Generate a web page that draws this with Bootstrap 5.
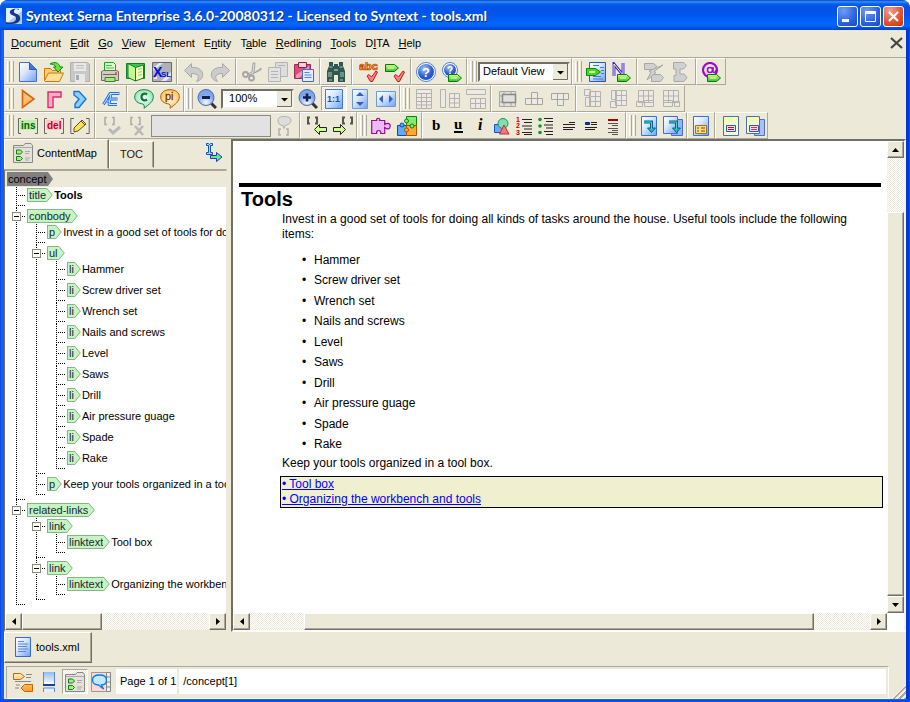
<!DOCTYPE html>
<html lang="en">
<head>
<meta charset="utf-8">
<meta name="viewport" content="width=device-width, initial-scale=1">
<title>Syntext Serna Enterprise 3.6.0-20080312 - Licensed to Syntext - tools.xml</title>
<link rel="stylesheet" href="https://cdn.jsdelivr.net/npm/bootstrap@5.3.0/dist/css/bootstrap.min.css">
<script src="https://cdn.jsdelivr.net/npm/bootstrap@5.3.0/dist/js/bootstrap.bundle.min.js"></script>
<style>
:root{--face:#ece9d8;--shade:#aca899;--dark:#716f64}
body{font:11px/16px "Liberation Sans",Arial,sans-serif;color:#000;background:#fff}
svg{display:block;flex:none}
button{font:inherit;color:inherit;padding:0;border:0;background:none}
.window{border-radius:8px 8px 0 0;overflow:hidden;background:#0a4be6}
.titlebar{height:30px;padding:2px 6px 0;background:linear-gradient(#0a3fc8 0,#3c94ff 2px,#0a6cf5 3px,#0053e4 6px,#0055ea 14px,#06f 24px,#0062f8 26px,#003dd0 30px)}
.titlebar h1{font:bold 14px/20px Lato,"Noto Sans",sans-serif;color:#fff;text-shadow:1px 1px #0a2f8c;margin:0}
.caps{gap:2px}
.capbtn{width:21px;height:21px;border:1px solid #fff;border-radius:3px;background:radial-gradient(circle at 30% 20%,#6f9cf8,#2a60e6 60%,#1a48c8)}
.capbtn.shut{background:radial-gradient(circle at 30% 20%,#f0a088,#e0502c 60%,#c03810)}
.client{min-height:0;margin:0 4px 3px;background:var(--face);box-shadow:-3px 0 #1660f0,3px 0 #0038d8,0 1px #1660f0}
.fit{min-width:0;min-height:0}
.menus{height:27px;padding:0 2px 2px 3px}
.menus .nav-link{color:#000;padding:4px 5px 4px 4px;line-height:16px}
.menus .nav-link span{text-decoration:underline}
.bars{border-top:1px solid var(--shade)}
.seg{height:27px;border:1px solid;border-color:#fff var(--shade) var(--shade) #fff;padding:0 1px;display:flex;align-items:center}
.seg-a{padding:0 2px 0 3px}.seg-b{padding:0 2px}.seg-c{padding:0 0 0 3px}
.bar:first-child>.seg:first-child{border-left-color:var(--face)}
.grip{width:8px;margin-right:1px;height:21px;flex:none;background:linear-gradient(90deg,transparent 1px,#fff 1px 2px,var(--face) 2px 3px,var(--shade) 3px 4px,transparent 4px 5px,#fff 5px 6px,var(--face) 6px 7px,var(--shade) 7px 8px)}
.tb{width:26px;height:25px;display:flex;align-items:center;justify-content:center;flex:none}
.tb svg{width:20px;height:20px}
.n22 .tb{width:22px}.n24 .tb{width:24px}
.tb:hover,.capbtn:hover{filter:brightness(1.06)}
.checker{background:repeating-conic-gradient(#fff 0 25%,#ece9d8 0 50%) 0 0/2px 2px}
.sunk{border:1px solid;border-color:var(--shade) #fff #fff var(--shade)}
select.pick{font:11px/15px "Liberation Sans",Arial,sans-serif;height:20px;border:2px solid;border-color:var(--dark) #f4f2e8 #f4f2e8 var(--dark);border-radius:0;padding:0 16px 0 3px;appearance:none;color:#000;background:#fff url("data:image/svg+xml,%3Csvg xmlns='http://www.w3.org/2000/svg' width='15' height='16'%3E%3Cpath fill='%23ece9d8' d='M0 0h15v16H0z'/%3E%3Cpath stroke='%23716f64' fill='none' d='M14.500 0v15.500H0'/%3E%3Cpath d='M4 7h7L7.500 10.500z'/%3E%3C/svg%3E") right center no-repeat}
.zoomsel{width:73px;margin:0 1px}.viewsel{width:92px}
input.tagbox{width:120px;height:22px;border:1px solid #8c8a80;background:#e2e2e2;padding:0 4px}
.side{width:223px;flex:none}
.tabrow{height:30px}
.ptab{height:27px;border:1px solid;border-color:#fff var(--dark) transparent #fff;box-shadow:inset -1px 0 var(--shade);display:flex;align-items:center}
.ptab.cur{height:30px;width:105px;padding:0 0 2px 8px}
.ptab.off{width:45px;margin-top:2px;padding-bottom:2px;justify-content:center;color:#311}
.tree{border:1px solid;border-width:2px 1px;border-color:var(--shade) var(--face) var(--face) var(--dark);background:#fff}
.frame{border:1px solid;border-width:2px 2px;border-color:var(--dark) #f6f4ea #fff var(--dark);background:#fff}
.tree ul{list-style:none;margin:0 0 0 9px;padding:0}
.tree .root{margin:0}
.tree .root>li>ul{margin-left:11px}
.tree .root>li>.nrow{background:var(--face);padding-left:2px}
.tree li li{padding:0 0 5px 11px;background:
 repeating-linear-gradient(#000 0 1px,transparent 1px 2px) 0 0/1px 100% no-repeat,
 repeating-linear-gradient(90deg,#000 0 1px,transparent 1px 2px) 0 8px/10px 1px no-repeat,
 repeating-linear-gradient(90deg,#000 0 1px,transparent 1px 2px) 0 calc(100% - 2px)/10px 1px no-repeat}
.tree li li:last-child{background-size:1px calc(100% - 2px),10px 1px,10px 1px}
.nrow{display:flex;align-items:center;height:16px;white-space:nowrap}
.fold{width:9px;height:9px;margin:0 6px 0 -15px;border:1px solid #8c8a78;background:linear-gradient(#000,#000) center/5px 1px no-repeat #fff;flex:none}
.tagname{height:14px;line-height:12px;border:1px solid #86b886;border-right:0;background:#c5f5c0;color:#1c2440;padding:0 0 0 1px}
.nrow .tip{margin-right:1px}
.tagname.sel{background:#808080;border-color:#808080;color:#000;padding:0}
.sbtn{width:17px;height:17px;flex:none;background:var(--face);border:1px solid;border-color:#fff var(--dark) var(--dark) #fff;box-shadow:inset -1px -1px var(--shade);display:flex;align-items:center;justify-content:center}
.thumb{background:var(--face);border:1px solid;border-color:#fff var(--dark) var(--dark) #fff;box-shadow:inset -1px -1px var(--shade)}
.hbar{height:17px}
.vbar{width:17px;padding-bottom:17px}
.t80{width:80px}.t54{height:54px}
.doc{padding:42px 4px 0 6px;font-size:12px;line-height:15px}
.doc h2{font-size:20px;line-height:22px;font-weight:bold;border-top:4px solid #000;margin:0 2px 0 0;padding:1px 2px 2px}
.doc .body{margin-left:43px}
.doc p{margin:0 12px 0 0}
.doc ul{margin:8px 0 1px;padding:0;list-style:none}
.doc ul li{line-height:20px;display:flex}
.doc ul li:nth-child(even){line-height:21px}
.doc ul li::before{content:"•";width:12px;margin-left:20px}
.rel{margin:5px 0 0 -2px;border:1px solid #000;background:#f0efd0;padding:0 1px}
.rel a{color:#00f;text-decoration:underline}
.filetab{height:31px;width:88px;border:1px solid;border-color:#fff var(--dark) var(--dark) #fff;box-shadow:inset -1px -1px var(--shade);padding:0 0 2px 9px}
.status{height:33px;border-color:var(--shade) #fff #fff var(--shade);margin:3px 17px 0 2px;padding:1px 2px 3px 3px}
.field{background:#fff;height:25px;line-height:24px;padding:0 1px 0 4px;margin-left:2px}
.sizer{width:14px;height:14px;right:0;bottom:0;background:repeating-linear-gradient(135deg,transparent 0 1px,#fff 1px 2px,var(--shade) 2px 4px);clip-path:polygon(100% 0,100% 100%,0 100%)}
</style>
</head>
<body>
<svg width="0" height="0" class="position-absolute" aria-hidden="true">
<defs>
<linearGradient id="pg" x1="0" y1="0" x2="1" y2="1"><stop offset="0" stop-color="#fff"/><stop offset=".4" stop-color="#dbe8ff"/><stop offset="1" stop-color="#6fa0f0"/></linearGradient>
<linearGradient id="pv" x1="0" y1="0" x2="0" y2="1"><stop offset="0" stop-color="#8fbcf8"/><stop offset="1" stop-color="#fff"/></linearGradient>
<linearGradient id="ye" x1="0" y1="0" x2="1" y2="1"><stop offset="0" stop-color="#e8ffb0"/><stop offset="1" stop-color="#fffbd8"/></linearGradient>
<linearGradient id="or" x1="0" y1="0" x2="0" y2="1"><stop offset="0" stop-color="#fff0b0"/><stop offset="1" stop-color="#ff9c20"/></linearGradient>
<linearGradient id="gn" x1="0" y1="0" x2="0" y2="1"><stop offset="0" stop-color="#d8ff80"/><stop offset="1" stop-color="#30c030"/></linearGradient>
<radialGradient id="ball" cx=".4" cy=".3"><stop offset="0" stop-color="#a8c8ff"/><stop offset="1" stop-color="#2858d0"/></radialGradient>
<radialGradient id="lens" cx=".5" cy=".8"><stop offset="0" stop-color="#f4faff"/><stop offset="1" stop-color="#7ca4f0"/></radialGradient>
<radialGradient id="mint"><stop offset="0" stop-color="#fff"/><stop offset="1" stop-color="#9ce4bc"/></radialGradient>
<radialGradient id="peach"><stop offset="0" stop-color="#fffbe8"/><stop offset="1" stop-color="#ffc860"/></radialGradient>
<symbol id="tipg" viewBox="0 0 7 14"><path d="M0 0H1L6.500 7 1 14H0z" fill="#c5f5c0"/><path d="M0 .5H.8L6.300 7 .8 13.500H0" fill="none" stroke="#86b886"/></symbol>
<symbol id="etag" viewBox="0 0 14 8"><path d="M.5.500h9l4 3.500-4 3.500h-9z" fill="url(#gn)" stroke="#087808"/><path d="M3 4h6" stroke="#f0ffc0"/></symbol>
<symbol id="tick" viewBox="0 0 12 12"><path d="M1 6l2-1.500 2.500 2.500 4.500-6 1.500 1-5 9.500h-2z" fill="#ff8080" stroke="#c01818"/></symbol>
<symbol id="cmap" viewBox="0 0 20 20"><path d="M.5 19.500v-17h10l1.500-2h6l1.500 2v17z" fill="#e4e2d8" stroke="#888"/><path d="M1 4.500h18" stroke="#aaa"/><path d="M3.500 7h4l2 2-2 2h-4zM3.500 13.500h4l2 2-2 2h-4z" fill="#a0f080" stroke="#187818"/><path d="M12 8.500h5M12 10.500h4M12 15h5M12 17h4" stroke="#aaa"/></symbol>
</defs>
</svg>
<div class="window vh-100 d-flex flex-column">
<header class="titlebar d-flex align-items-center">
<svg class="me-1" width="16" height="16" viewBox="0 0 16 16"><path fill="#e4efff" d="M0 0h16v16H0z"/><path fill="#1a4c98" d="M0 16L16 3v13z" opacity=".25"/><path d="M13 1C7 0 3 2 4 5s7 2 6 6-6 4-10 3v2h6c6 0 9-3 8-7S7 6 8 3s3-2 5-1z" fill="#123c88"/></svg>
<h1 class="flex-grow-1">Syntext Serna Enterprise 3.6.0-20080312 - Licensed to Syntext - tools.xml</h1>
<div class="caps d-flex">
<button class="capbtn" aria-label="Minimize"><svg width="19" height="19"><path fill="#fff" d="M4 12h7v3H4z"/></svg></button>
<button class="capbtn" aria-label="Maximize"><svg width="19" height="19"><path fill="none" stroke="#fff" d="M4.500 5h10v9.500h-10z"/><path fill="#fff" d="M4 4h11v3H4z"/></svg></button>
<button class="capbtn shut" aria-label="Close"><svg width="19" height="19"><path stroke="#fff" stroke-width="2.200" d="M5 5l9 9M14 5l-9 9"/></svg></button>
</div>
</header>
<main class="client flex-grow-1 d-flex flex-column position-relative">
<nav class="menus d-flex align-items-center">
<ul class="nav flex-grow-1 flex-nowrap">
<li><a class="nav-link" href="#"><span>D</span>ocument</a></li><li><a class="nav-link" href="#"><span>E</span>dit</a></li><li><a class="nav-link" href="#"><span>G</span>o</a></li><li><a class="nav-link" href="#"><span>V</span>iew</a></li><li><a class="nav-link" href="#">E<span>l</span>ement</a></li><li><a class="nav-link" href="#">E<span>n</span>tity</a></li><li><a class="nav-link" href="#">T<span>a</span>ble</a></li><li><a class="nav-link" href="#"><span>R</span>edlining</a></li><li><a class="nav-link" href="#"><span>T</span>ools</a></li><li><a class="nav-link" href="#">D<span>I</span>TA</a></li><li><a class="nav-link" href="#"><span>H</span>elp</a></li>
</ul>
<button aria-label="Close document"><svg width="16" height="14" viewBox="0 0 16 14"><path d="M3 2l11 10M14 2L3 12" stroke="#444" stroke-width="2.200"/></svg></button>
</nav>
<div class="bars">
<!-- file, edit and view tools -->
<div class="d-flex">
<div class="bar d-flex">
<div class="seg"><span class="grip"></span>
<button class="tb" aria-label="New"><svg viewBox="0 0 20 20"><path d="M1.500.500h10l7 7v12h-17z" fill="url(#pg)" stroke="#4870c8"/><path d="M11.500.500v7h7" fill="#3878e0" stroke="#2858c0"/></svg></button>
<button class="tb" aria-label="Open"><svg viewBox="0 0 20 20"><path d="M.5 18.500v-12h6l2 2h8v4" fill="#ffd070" stroke="#c87810"/><path d="M.5 18.500l4-7.500h15l-4 8.500H1z" fill="#ffe098" stroke="#d07808"/><path d="M6 2c5-3 9-1 10 3h3l-5 5-4.500-5H12c-1-2-3-3-6-3z" fill="#70e040" stroke="#108820"/></svg></button>
<button class="tb" aria-label="Save" disabled><svg viewBox="0 0 20 20"><path d="M.5.500h17l2 2v17H.5z" fill="#c8c8c8" stroke="#b0b0b0"/><path d="M4 1h12v8H4zM5 12h10v8H5z" fill="#e8e8e8"/><path d="M6 3.500h8M6 6h8" stroke="#bbb"/><path d="M6 13h3v5H6z" fill="#aaa"/></svg></button>
</div>
<div class="seg">
<button class="tb" aria-label="Print"><svg viewBox="0 0 20 20"><path d="M4.500 9V.5h9l2 2V9" fill="#e0ffd0" stroke="#20a020"/><path d="M6 3.500h6M6 6h8" stroke="#40c040"/><path d="M1.500 18.500v-9l2-1h13l2 1v9z" fill="#d0ccc0" stroke="#706c60"/><path d="M5 15.500h10v4H5z" fill="#a0f070" stroke="#507050"/><path d="M3 12.500h14" stroke="#706c60"/><path d="M15 11h2" stroke="#f00"/></svg></button>
<button class="tb" aria-label="Preview"><svg viewBox="0 0 20 20"><path d="M.5 1.500h18v15H.5z" fill="#38c848" stroke="#108030"/><path d="M9.500 5.500L17.500 3v13l-8 3z" fill="#f0ffc0" stroke="#108030"/><path d="M2 1.500l7.500 4V19L2 15.500z" fill="#c8f890" stroke="#108030"/><path d="M12 7.500l4-1M12 10.500l4-1M12 13.500l4-1" stroke="#90d060"/></svg></button>
<button class="tb" aria-label="XSL"><svg viewBox="0 0 20 20"><path d="M.5.500h19v19H.5z" fill="#b0b0b8" stroke="#667"/><path d="M1 6L7 1h4L1 9zM19 10L9 19h5l5-5zM1 17l4-3v3z" fill="#e8e8ec"/><text x="1" y="15" font-family="Liberation Sans" font-weight="bold" font-size="14" fill="#0010d0">X</text><text x="9" y="15" font-family="Liberation Sans" font-weight="bold" font-size="8" fill="#0010d0">SL</text></svg></button>
</div>
<div class="seg seg-a">
<button class="tb" aria-label="Undo" disabled><svg viewBox="0 0 20 20"><path d="M7.500 1.500v4c8-1 12 4 11 9-1 3-3 4-6 5 3-4 3-8-5-8v4l-7-7z" fill="#ccc" stroke="#a8a8a8"/></svg></button>
<button class="tb" aria-label="Redo" disabled><svg viewBox="0 0 20 20"><path d="M12.500 1.500v4c-8-1-12 4-11 9 1 3 3 4 6 5-3-4-3-8 5-8v4l7-7z" fill="#ccc" stroke="#a8a8a8"/></svg></button>
</div>
<div class="seg seg-b">
<button class="tb" aria-label="Cut" disabled><svg viewBox="0 0 20 20" fill="none" stroke="#a4a4a4"><path d="M11 1h2l-1 10 7-5v2L8 13l-2-1 4-2z" fill="#ddd"/><g stroke-width="1.800"><circle cx="3.500" cy="12.500" r="2.500"/><circle cx="9.500" cy="16" r="2.500"/></g></svg></button>
<button class="tb" aria-label="Copy" disabled><svg viewBox="0 0 20 20" stroke="#b4b4b4"><path d="M7.500.500h12v14h-12z" fill="#ddd"/><path d="M.5 5.500h12v14H.5z" fill="#e2e2e2"/><path d="M3 9.500h7M3 12.500h7M3 15.500h7M10 3.500h7"/></svg></button>
<button class="tb" aria-label="Paste"><svg viewBox="0 0 20 20"><path d="M.5 2.500h16v14H.5z" fill="#d85078" stroke="#a02858"/><path d="M2 13L15 4v3L5 16H2z" fill="#f098b0"/><path d="M4.500.500h8v5h-8z" fill="#f8d0dc" stroke="#902050"/><path d="M8.500 7.500h11v12h-11z" fill="#e4ecff" stroke="#4868c0"/><path d="M10.500 10.500h5M10.500 13h7M10.500 15.500h7" stroke="#5080e0"/></svg></button>
</div>
<div class="seg seg-b"><button class="tb" aria-label="Find"><svg viewBox="0 0 20 20"><path d="M3 0h4v4h1V2h4v2h1V0h4v4l2 5v11h-7v-7H8v7H1V9l2-5z" fill="#305850"/><path d="M3.500 5h3M13.500 5h3M3 10v5M5 10v5M15 10v5M17 10v5M3 18h3M14 18h3" stroke="#a8ccc0"/><path d="M8 8h4" stroke="#80a898" stroke-width="2"/></svg></button></div>
<div class="seg seg-a">
<button class="tb" aria-label="Spell check"><svg viewBox="0 0 20 20"><text x="0" y="8" font-family="Liberation Sans" font-weight="bold" font-size="11" fill="#ffc030" stroke="#c03800" stroke-width=".7">abc</text><use href="#tick" x="7" y="8" width="12" height="12"/></svg></button>
<button class="tb" aria-label="Validate"><svg viewBox="0 0 20 20"><use href="#etag" x="0" y="2" width="14" height="8"/><use href="#tick" x="8" y="8" width="12" height="12"/></svg></button>
</div>
<div class="seg">
<button class="tb" aria-label="Help"><svg viewBox="0 0 20 20"><circle cx="10" cy="10" r="9.500" fill="#fff" stroke="#5080d8"/><circle cx="10" cy="10" r="8" fill="url(#ball)"/><text x="6" y="15" font-family="Liberation Sans" font-weight="bold" font-size="13" fill="#fff">?</text></svg></button>
<button class="tb" aria-label="Element help"><svg viewBox="0 0 20 20"><circle cx="8" cy="8" r="7.500" fill="#fff" stroke="#5080d8"/><circle cx="8" cy="8" r="6" fill="url(#ball)"/><text x="5" y="12" font-family="Liberation Sans" font-weight="bold" font-size="10" fill="#fff">?</text><use href="#etag" x="6" y="12" width="14" height="8"/></svg></button>
</div>
</div>
<div class="bar d-flex"><div class="seg"><span class="grip"></span><select class="pick viewsel" aria-label="View"><option>Default View</option></select></div></div>
<div class="bar d-flex">
<div class="seg"><span class="grip"></span>
<button class="tb" aria-label="Insert element"><svg viewBox="0 0 20 20"><path d="M3.500.500h16v19h-16z" fill="url(#pg)" stroke="#2858b8"/><path d="M7 3.500h6M14 5.500h4M15 8.500h3M15 11.500h3M7 14.500h8M7 17h10" stroke="#4878d0"/><path d="M.5 6.500h9l5 3.500-5 3.500h-9z" fill="#48d830" stroke="#088808"/><path d="M3 10h6" stroke="#e0ff80" stroke-width="2"/></svg></button>
<button class="tb" aria-label="Entity"><svg viewBox="0 0 20 20"><path d="M2 14V2L11 13V1" fill="none" stroke="#4020c0" stroke-width="2.800"/><path d="M2 14V2L11 13V1" fill="none" stroke="#fff" stroke-width=".9"/><use href="#etag" x="5" y="12" width="14" height="8"/></svg></button>
</div>
<div class="seg seg-a">
<button class="tb" aria-label="Split" disabled><svg viewBox="0 0 20 20" fill="#d0d0d0" stroke="#a8a8a8"><path d="M.5 1.500h9l3.500 3-3.500 3h-9zM7.500 12.500h9l3 3-3 4h-9z"/><path d="M19 3L10 9.500l2 1L3 18l4-8-2-1z"/></svg></button>
<button class="tb" aria-label="Join" disabled><svg viewBox="0 0 20 20" fill="#d0d0d0" stroke="#a8a8a8"><path d="M3.500.500h10l3 3-3 3.500H10v5h4l3 3.500-3 4H4v-6h2V7H3.500z"/></svg></button>
</div>
<div class="seg"><button class="tb" aria-label="Attributes"><svg viewBox="0 0 20 20"><circle cx="9" cy="8" r="7" fill="#f6dcff" stroke="#9810b8" stroke-width="2.200"/><circle cx="9" cy="8" r="2.500" fill="#fff" stroke="#9810b8" stroke-width="1.600"/><path d="M12 5v5c1 1 3 0 3-2" fill="none" stroke="#9810b8" stroke-width="1.500"/><use href="#etag" x="6" y="12" width="14" height="8"/></svg></button></div>
</div>
</div>
<!-- structure, zoom and table tools -->
<div class="d-flex">
<div class="bar d-flex">
<div class="seg"><span class="grip"></span>
<button class="tb" aria-label="Next"><svg viewBox="0 0 20 20"><path d="M4.500 1.500v17L16 10z" fill="#ffc070" stroke="#e06010" stroke-width="1.600"/></svg></button>
<button class="tb" aria-label="Corner"><svg viewBox="0 0 20 20"><path d="M4 18.500V3h13v5H9v10.500z" fill="#ffb0c8" stroke="#e02868" stroke-width="1.400"/></svg></button>
<button class="tb" aria-label="Forward"><svg viewBox="0 0 20 20"><path d="M4 2.500h5l7 7.500-7 8.500H5v-3.500l4-5-5-4z" fill="#90ccff" stroke="#1078d8" stroke-width="1.400"/></svg></button>
</div>
<div class="seg seg-b"><button class="tb" aria-label="Special characters"><svg viewBox="0 0 20 20" fill="none" stroke-linejoin="round"><path d="M2.500 15.500L9 4.500h9.500M10 4.500l-2 11h8M9.500 10h7M5.500 12h3" stroke="#2070e0" stroke-width="2.800"/><path d="M2.500 15.500L9 4.500h9.500M10 4.500l-2 11h8M9.500 10h7M5.500 12h3" stroke="#d8f0ff" stroke-width=".9"/></svg></button></div>
<div class="seg seg-c">
<button class="tb" aria-label="Comment"><svg viewBox="0 0 20 20"><path d="M10 .7c6 0 9.300 3 9.300 7 0 5-4 7.500-9.300 11.600.500-2 .500-3-1-4.300C4 14.500.7 12 .7 8S4 .7 10 .7z" fill="url(#mint)" stroke="#108850"/><path d="M13 5.500c-2-1.500-5.500-1-5.500 2.500s3.500 4 5.500 2.500" fill="none" stroke="#107838" stroke-width="2.200"/></svg></button>
<button class="tb" aria-label="Processing instruction"><svg viewBox="0 0 20 20"><path d="M10 .7c6 0 9.300 3 9.300 7 0 5-4 7.500-9.300 11.600.500-2 .500-3-1-4.300C4 14.500.7 12 .7 8S4 .7 10 .7z" fill="url(#peach)" stroke="#b06010"/><text x="5" y="11" font-family="Liberation Sans" font-size="11" fill="#803000" stroke="#803000" stroke-width=".3">pi</text></svg></button>
</div>
</div>
<div class="bar d-flex">
<div class="seg p-0"><span class="grip"></span>
<button class="tb" aria-label="Zoom out"><svg viewBox="0 0 20 20"><path d="M14 14l5 5" stroke="#333" stroke-width="3"/><circle cx="9" cy="8.500" r="8" fill="url(#lens)" stroke="#5068a8"/><path d="M5 8.500h8" stroke="#102050" stroke-width="3"/></svg></button>
<select class="pick zoomsel" aria-label="Zoom"><option>&nbsp;100%</option></select>
<button class="tb" aria-label="Zoom in"><svg viewBox="0 0 20 20"><path d="M14 14l5 5" stroke="#333" stroke-width="3"/><circle cx="9" cy="8.500" r="8" fill="url(#lens)" stroke="#5068a8"/><path d="M5 8.500h8M9 4.500v8" stroke="#102050" stroke-width="2.600"/></svg></button>
<button class="tb checker sunk" aria-label="Actual size" aria-pressed="true"><svg viewBox="0 0 20 20"><path d="M1.500.500h17v19h-17z" fill="url(#pg)" stroke="#4878d0"/><text x="3" y="13" font-family="Liberation Sans" font-size="9" font-weight="bold" fill="#2050b0">1:1</text></svg></button>
<button class="tb" aria-label="Fit height"><svg viewBox="0 0 20 20"><path d="M2.500.500h15v19h-15z" fill="url(#pg)" stroke="#6898e8"/><path d="M6 7l4-4 4 4zM6 13l4 4 4-4z" fill="#3060c0"/></svg></button>
<button class="tb" aria-label="Fit width"><svg viewBox="0 0 20 20"><path d="M.5 2.500h19v15H.5z" fill="url(#pg)" stroke="#6898e8"/><path d="M7 6l-4 4 4 4zM13 6l4 4-4 4z" fill="#3060c0"/></svg></button>
</div>
</div>
<div class="bar d-flex">
<div class="seg"><span class="grip"></span>
<button class="tb" aria-label="Insert table" disabled><svg viewBox="0 0 20 20" fill="#eceae4" stroke="#b4b2aa"><path d="M2.500.500h15v4h-15zM2.500 4.500h15v15h-15zM2.500 8.500h15M2.500 12.500h15M2.500 16h15M7.500 5v14M12.500 5v14"/></svg></button>
<button class="tb" aria-label="Insert column" disabled><svg viewBox="0 0 20 20" fill="#eceae4" stroke="#b4b2aa"><path d="M.5.500h5v18h-5zM9.500 4.500h10v14h-10zM9.500 9.500h10M9.500 14h10M14.500 5v14"/></svg></button>
<button class="tb" aria-label="Insert row" disabled><svg viewBox="0 0 20 20" fill="#eceae4" stroke="#b4b2aa"><path d="M.5.500h19v5H.5zM4.500 9.500h15v10h-15zM4.500 14.500h15M9.500 10v9M14.500 10v9"/></svg></button>
</div>
<div class="seg seg-a">
<button class="tb" aria-label="Cell" disabled><svg viewBox="0 0 20 20" fill="#e0e0dc" stroke="#a8a69c"><path d="M1.500 2.500h16v15h-16zM1 7h17M1 13h17M6 2v16M13 2v16"/><path d="M4.500 5.500h13v8h-13z" stroke="#888" stroke-width="1.500"/></svg></button>
<button class="tb" aria-label="Cell below" disabled><svg viewBox="0 0 20 20" fill="#eceae4" stroke="#a8a69c"><path d="M1.500 9.500h17v6h-17zM7.500 3.500h6v12h-6z"/></svg></button>
<button class="tb" aria-label="Cell above" disabled><svg viewBox="0 0 20 20" fill="#eceae4" stroke="#a8a69c"><path d="M1.500 4.500h17v6h-17zM7.500 4.500h6v12h-6z"/></svg></button>
</div>
<div class="seg seg-c">
<button class="tb" aria-label="Merge left" disabled><svg viewBox="0 0 20 20" fill="#eceae4" stroke="#b4b2aa"><path d="M6.500 2.500h11v15h-11zM12.500 3v14M7 7.500h10M7 12.500h10M1.500.500h6v6h-6zM2.500 8.500h5v9h-5z"/></svg></button>
<button class="tb" aria-label="Merge up" disabled><svg viewBox="0 0 20 20" fill="#eceae4" stroke="#b4b2aa"><path d="M6.500 1.500h11v15h-11zM12.500 2v14M7 6.500h10M7 11.500h10M2.500 1.500h5v9h-5zM1.500 12.500h6v6h-6z"/></svg></button>
<button class="tb" aria-label="Merge right" disabled><svg viewBox="0 0 20 20" fill="#eceae4" stroke="#b4b2aa"><path d="M3.500 1.500h15v12h-15zM8.500 2v12M13.500 2v12M4 7h14M1.500 12.500h6v5h-6zM9.500 11.500h9v6h-9z"/></svg></button>
<button class="tb" aria-label="Merge down" disabled><svg viewBox="0 0 20 20" fill="#eceae4" stroke="#b4b2aa"><path d="M2.500 1.500h15v12h-15zM7.500 2v12M12.500 2v12M3 7h14M2.500 11.500h9v6h-9zM13.500 12.500h5v5h-5z"/></svg></button>
</div>
</div>
</div>
<!-- redlining, formatting and topic tools -->
<div class="d-flex">
<div class="bar d-flex">
<div class="seg"><span class="grip"></span>
<button class="tb" aria-label="Insertions"><svg viewBox="0 0 20 20"><path d="M3 2.500H.5v15H3M17 2.500h2.500v15H17" fill="none" stroke="#666"/><path d="M2 4h16v10H2z" fill="#b8f0a8"/><text x="3" y="13" font-family="Liberation Sans" font-size="10" font-weight="bold" fill="#006000">ins</text></svg></button>
<button class="tb" aria-label="Deletions"><svg viewBox="0 0 20 20"><path d="M3 2.500H.5v15H3M17 2.500h2.500v15H17" fill="none" stroke="#666"/><path d="M2 4h16v10H2z" fill="#ffc8c8"/><text x="3" y="13" font-family="Liberation Sans" font-size="10" font-weight="bold" fill="#c00020">del</text></svg></button>
<button class="tb" aria-label="Annotate"><svg viewBox="0 0 20 20"><path d="M4 2.500H.8v15H4M16 2.500h3.200v15H16" fill="none" stroke="#666"/><path d="M4 12l8-8 4 4-8 7-4 1z" fill="#ffe050" stroke="#605030"/><path d="M11 5l4 4" stroke="#605030"/></svg></button>
</div>
<div class="seg seg-a">
<button class="tb" aria-label="Accept change" disabled><svg viewBox="0 0 20 20" fill="none" stroke="#aaa" stroke-width="1.500"><path d="M5 1.500H3v7h2M10 1.500h2v7h-2"/><path d="M7 13l4 4 7-6" stroke-width="3" stroke="#b8b8b8"/></svg></button>
<button class="tb" aria-label="Reject change" disabled><svg viewBox="0 0 20 20" fill="none" stroke="#aaa" stroke-width="1.500"><path d="M5 1.500H3v7h2M10 1.500h2v7h-2"/><path d="M7 10l8 9M15 10l-8 9" stroke-width="2.500" stroke="#b8b8b8"/></svg></button>
<input class="tagbox" aria-label="Comment text" disabled>
<button class="tb" aria-label="Edit comment" disabled><svg viewBox="0 0 20 20" fill="#ddd" stroke="#b0b0b0"><path d="M10 .5c4 0 7 1 7 4s-3 4-6 5l-1 3-1-3c-3 0-5-2-5-5s3-4 6-4z"/><path d="M7 13H5v6h2M12 13h2v6h-2" fill="none" stroke-width="1.500"/></svg></button>
</div>
<div class="seg seg-c">
<button class="tb" aria-label="Previous change"><svg viewBox="0 0 20 20"><path d="M3 1.500H1v6h2M8 1.500h2v6H8" fill="none" stroke="#555" stroke-width="2"/><path d="M7.500 13.500l5-5v3h7v4h-7v3z" fill="#d0ff90" stroke="#222"/></svg></button>
<button class="tb" aria-label="Next change"><svg viewBox="0 0 20 20"><path d="M12 1.500h-2v6h2M17 1.500h2v6h-2" fill="none" stroke="#555" stroke-width="2"/><path d="M12.500 13.500l-5-5v3h-7v4h7v3z" fill="#d0ff90" stroke="#222"/></svg></button>
</div>
</div>
<div class="bar d-flex">
<div class="seg"><span class="grip"></span>
<button class="tb" aria-label="Plugin"><svg viewBox="0 0 20 20"><path d="M.7 17.500v-13h5c-1-3 4-3 3 0h5v4c3-2 6-1 5.500 2s-3 3-5.500 1v6h-4c1-4-5-4-4 0z" fill="#f0b8f8" stroke="#901090" stroke-width="1.200"/></svg></button>
<button class="tb" aria-label="Plugins"><svg viewBox="0 0 20 20"><path d="M9.500.500h10v9h-10z" fill="#88e868" stroke="#108010"/><path d="M.5 9.500h9v10h-9z" fill="#60a8f8" stroke="#1048b0"/><path d="M9.500 9.500h10v10h-10z" fill="#ffa830" stroke="#b05000"/><circle cx="9.500" cy="5" r="2" fill="#88e868" stroke="#108010"/><circle cx="9.500" cy="14" r="2" fill="#ffa830" stroke="#b05000"/><circle cx="5" cy="9" r="2" fill="#60a8f8" stroke="#1048b0"/><circle cx="15" cy="10" r="2" fill="#88e868" stroke="#108010"/></svg></button>
</div>
<div class="seg n22 seg-b">
<button class="tb" aria-label="Bold"><svg viewBox="0 0 20 20"><text x="6" y="14" font-family="Liberation Serif" font-size="15" font-weight="bold">b</text></svg></button>
<button class="tb" aria-label="Underline"><svg viewBox="0 0 20 20"><text x="6" y="13" font-family="Liberation Serif" font-size="15" font-weight="bold">u</text><path d="M6 16h9" stroke="#000" stroke-width="2"/></svg></button>
<button class="tb" aria-label="Italic"><svg viewBox="0 0 20 20"><text x="8" y="14" font-family="Liberation Serif" font-size="16" font-weight="bold" font-style="italic">i</text></svg></button>
<button class="tb" aria-label="Figure"><svg viewBox="0 0 20 20"><path d="M2.500 8.500h10v8h-10z" fill="#70a8f8" stroke="#1850c0"/><circle cx="11" cy="7.500" r="5" fill="#80e0b0" stroke="#189060"/><path d="M7.500 18L12 9l5 9z" fill="#f07878" stroke="#c03030"/></svg></button>
<button class="tb" aria-label="Ordered list"><svg viewBox="0 0 20 20"><path d="M8 3.500h10M10 6.500h8M8 10h10M10 13h8M8 16.500h10M10 18.500h8" stroke="#222"/><g font-family="Liberation Sans" font-size="7" font-weight="bold" fill="#b00"><text x="2" y="6">1</text><text x="2" y="12">2</text><text x="2" y="19">3</text></g></svg></button>
<button class="tb" aria-label="Bulleted list"><svg viewBox="0 0 20 20"><path d="M8 2.500h9M10 5.500h7M8 9h9M10 12h7M8 15.500h9M10 18.500h7" stroke="#222"/><g fill="#189030"><circle cx="4" cy="3.500" r="1.800"/><circle cx="4" cy="10" r="1.800"/><circle cx="4" cy="16.500" r="1.800"/></g></svg></button>
<button class="tb" aria-label="Paragraph"><svg viewBox="0 0 20 20"><path d="M11 6.500h6M5 8.500h12M5 11.500h12M5 13.500h10" stroke="#222"/></svg></button>
<button class="tb" aria-label="Note"><svg viewBox="0 0 20 20"><path d="M11 6.500h6M11 8.500h6M5 11.500h12M5 13.500h10" stroke="#222"/><path d="M5.500 6.500h4v2h-4z" fill="#1840c0" stroke="#002080"/></svg></button>
<button class="tb" aria-label="Section"><svg viewBox="0 0 20 20"><path d="M6 4h10" stroke="#a00000" stroke-width="2"/><path d="M6 7.500h10M10 9.500h6M6 12.500h10M10 14.500h6M6 16.500h10M10 18.500h6" stroke="#555"/></svg></button>
</div>
</div>
<div class="bar d-flex">
<div class="seg n24"><span class="grip"></span>
<button class="tb" aria-label="Insert topic"><svg viewBox="0 0 20 20"><path d="M2.500.500h15v19h-15z" fill="url(#pg)" stroke="#4070c8"/><path d="M5 6h7.500v7" fill="none" stroke="#006880" stroke-width="3"/><path d="M8.500 12h8l-4 4.500z" fill="#20b8c8" stroke="#006880"/><path d="M5 6h7.500v7" fill="none" stroke="#40d8e0"/></svg></button>
<button class="tb" aria-label="Insert topics"><svg viewBox="0 0 20 20"><path d="M8.500 3.500h11v16h-11z" fill="#98b4f0" stroke="#4070c8"/><path d="M.5.500h14v17H.5z" fill="url(#pg)" stroke="#4070c8"/><path d="M6 6h7.500v7" fill="none" stroke="#006880" stroke-width="3"/><path d="M9.500 12h8l-4 4.500z" fill="#20b8c8" stroke="#006880"/><path d="M6 6h7.500v7" fill="none" stroke="#40d8e0"/></svg></button>
</div>
<div class="seg n24"><button class="tb" aria-label="Properties"><svg viewBox="0 0 20 20"><path d="M2.500.500h15v19h-15z" fill="url(#pg)" stroke="#4070c8"/><path d="M4.500 9.500h11v8h-11z" fill="#ffdc80" stroke="#a07020"/><path d="M6 12h2M10 12h4M6 15h2M10 15h4" stroke="#704800"/></svg></button></div>
<div class="seg n24 seg-c">
<button class="tb" aria-label="Reference"><svg viewBox="0 0 20 20"><path d="M2.500.500h15v19h-15z" fill="url(#ye)" stroke="#5070a8"/><path d="M5.500 9.500h9v6h-9z" fill="#d8e4ff" stroke="#3058b0"/><path d="M7 11.500h6M7 13.500h6" stroke="#e00000"/></svg></button>
<button class="tb" aria-label="References"><svg viewBox="0 0 20 20"><path d="M9.500 3.500h10v16h-10z" fill="#a8c0f4" stroke="#5070c0"/><path d="M1.500.500h13v17h-13z" fill="url(#ye)" stroke="#5070a8"/><path d="M4.500 9.500h9v6h-9z" fill="#d8e4ff" stroke="#3058b0"/><path d="M6 11.500h6M6 13.500h6" stroke="#e03030"/></svg></button>
</div>
</div>
</div>
</div>

<div class="fit flex-grow-1 d-flex">
<section class="side d-flex flex-column me-1">
<div class="tabrow d-flex" role="tablist">
<button class="ptab cur" role="tab" aria-selected="true"><svg class="me-1" width="20" height="20"><use href="#cmap"/></svg>ContentMap</button>
<button class="ptab off" role="tab" aria-selected="false">TOC</button>
<button class="ms-auto me-1 pb-1" aria-label="Follow cursor"><svg width="18" height="20" viewBox="0 0 18 20"><path d="M1.500 1.500h2l1 1 1-1h2v2h-2v7h2v2h-6v-2h2v-7h-2z" fill="#a8d8ff" stroke="#1050c0"/><path d="M5.500 13.500h6v-3l5.500 4.500-5.500 4.500v-3h-6z" fill="#60e8a0" stroke="#2040a0"/></svg></button>
</div>
<div class="tree fit flex-grow-1 d-flex flex-column">
<div class="flex-grow-1 overflow-hidden">
<ul class="root"><li><div class="nrow"><span class="tagname sel">concept</span><svg class="tip" width="7" height="14"><path d="M0 0h1l5 7-5 7H0z" fill="#808080"/></svg></div>
<ul>
<li><div class="nrow"><span class="tagname">title</span><svg class="tip" width="7" height="14"><use href="#tipg"/></svg><b>Tools</b></div></li>
<li><div class="nrow"><button class="fold" aria-label="Collapse conbody"></button><span class="tagname">conbody</span><svg class="tip" width="7" height="14"><use href="#tipg"/></svg></div>
<ul>
<li><div class="nrow"><span class="tagname">p</span><svg class="tip" width="7" height="14"><use href="#tipg"/></svg>Invest in a good set of tools for doing</div></li>
<li><div class="nrow"><button class="fold" aria-label="Collapse ul"></button><span class="tagname">ul</span><svg class="tip" width="7" height="14"><use href="#tipg"/></svg></div>
<ul>
<li><div class="nrow"><span class="tagname">li</span><svg class="tip" width="7" height="14"><use href="#tipg"/></svg>Hammer</div></li>
<li><div class="nrow"><span class="tagname">li</span><svg class="tip" width="7" height="14"><use href="#tipg"/></svg>Screw driver set</div></li>
<li><div class="nrow"><span class="tagname">li</span><svg class="tip" width="7" height="14"><use href="#tipg"/></svg>Wrench set</div></li>
<li><div class="nrow"><span class="tagname">li</span><svg class="tip" width="7" height="14"><use href="#tipg"/></svg>Nails and screws</div></li>
<li><div class="nrow"><span class="tagname">li</span><svg class="tip" width="7" height="14"><use href="#tipg"/></svg>Level</div></li>
<li><div class="nrow"><span class="tagname">li</span><svg class="tip" width="7" height="14"><use href="#tipg"/></svg>Saws</div></li>
<li><div class="nrow"><span class="tagname">li</span><svg class="tip" width="7" height="14"><use href="#tipg"/></svg>Drill</div></li>
<li><div class="nrow"><span class="tagname">li</span><svg class="tip" width="7" height="14"><use href="#tipg"/></svg>Air pressure guage</div></li>
<li><div class="nrow"><span class="tagname">li</span><svg class="tip" width="7" height="14"><use href="#tipg"/></svg>Spade</div></li>
<li><div class="nrow"><span class="tagname">li</span><svg class="tip" width="7" height="14"><use href="#tipg"/></svg>Rake</div></li>
</ul></li>
<li><div class="nrow"><span class="tagname">p</span><svg class="tip" width="7" height="14"><use href="#tipg"/></svg>Keep your tools organized in a tool</div></li>
</ul></li>
<li><div class="nrow"><button class="fold" aria-label="Collapse related-links"></button><span class="tagname">related-links</span><svg class="tip" width="7" height="14"><use href="#tipg"/></svg></div>
<ul>
<li><div class="nrow"><button class="fold" aria-label="Collapse link"></button><span class="tagname">link</span><svg class="tip" width="7" height="14"><use href="#tipg"/></svg></div>
<ul><li><div class="nrow"><span class="tagname">linktext</span><svg class="tip" width="7" height="14"><use href="#tipg"/></svg>Tool box</div></li></ul></li>
<li><div class="nrow"><button class="fold" aria-label="Collapse link"></button><span class="tagname">link</span><svg class="tip" width="7" height="14"><use href="#tipg"/></svg></div>
<ul><li><div class="nrow"><span class="tagname">linktext</span><svg class="tip" width="7" height="14"><use href="#tipg"/></svg>Organizing the workbench</div></li></ul></li>
</ul></li>
</ul></li></ul>
</div>
<div class="hbar d-flex checker">
<button class="sbtn" aria-label="Scroll left"><svg width="4" height="7"><path d="M4 0v7L0 3.500z"/></svg></button><div class="thumb t80"></div><button class="sbtn ms-auto" aria-label="Scroll right"><svg width="4" height="7"><path d="M0 0v7l4-3.500z"/></svg></button>
</div>
</div>
</section>
<section class="frame fit flex-grow-1 d-flex">
<div class="fit flex-grow-1 d-flex flex-column">
<article class="doc flex-grow-1 overflow-hidden">
<h2>Tools</h2>
<div class="body">
<p>Invest in a good set of tools for doing all kinds of tasks around the house. Useful tools include the following items:</p>
<ul><li>Hammer</li><li>Screw driver set</li><li>Wrench set</li><li>Nails and screws</li><li>Level</li><li>Saws</li><li>Drill</li><li>Air pressure guage</li><li>Spade</li><li>Rake</li></ul>
<p>Keep your tools organized in a tool box.</p>
<div class="rel"><a href="#">• Tool box</a><br><a href="#">• Organizing the workbench and tools</a></div>
</div>
</article>
<div class="hbar d-flex checker">
<button class="sbtn" aria-label="Scroll left"><svg width="4" height="7"><path d="M4 0v7L0 3.500z"/></svg></button><div style="width:8.3%"></div><div class="thumb" style="width:78%"></div><button class="sbtn ms-auto" aria-label="Scroll right"><svg width="4" height="7"><path d="M0 0v7l4-3.500z"/></svg></button>
</div>
</div>
<div class="vbar d-flex flex-column">
<div class="flex-grow-1 d-flex flex-column checker">
<button class="sbtn" aria-label="Scroll up"><svg width="7" height="4"><path d="M0 4h7L3.500 0z"/></svg></button><div class="t54"></div><div class="thumb flex-grow-1"></div><button class="sbtn" aria-label="Scroll down"><svg width="7" height="4"><path d="M0 0h7L3.500 4z"/></svg></button>
</div>
</div>
</section>
</div>

<div><button class="filetab d-flex align-items-center"><svg class="me-1" width="18" height="20" viewBox="0 0 18 20"><path d="M1.500.500h15v19h-15z" fill="url(#pg)" stroke="#3868c8"/><path d="M4 4.500h6M4 7h10M4 9.500h9M4 12h10M4 14.500h8" stroke="#5888d8"/></svg>tools.xml</button></div>
<footer class="status sunk d-flex align-items-center">
<button class="tb" aria-label="Inline tags"><svg viewBox="0 0 20 20"><path d="M.5 1.500h7l4 3-4 3h-7zM19.500 12.500h-8l-3.500 3.500 3.500 3.500h8z" fill="url(#or)" stroke="#c86010"/><path d="M13 2.500h6M13 5.500h5M2 9.500h16M3 13h4M2 16h4" stroke="#888"/></svg></button>
<button class="tb" aria-label="Page view"><svg viewBox="0 0 20 20"><path d="M4.500 0v12.500h11V0" fill="url(#pv)" stroke="#5888e0"/><path d="M4 13h12" stroke="#1840a0" stroke-width="2"/><path d="M4.500 20v-4h11v4" fill="#e8f0ff" stroke="#5888e0"/></svg></button>
<button class="tb checker sunk" aria-label="Content map" aria-pressed="true"><svg viewBox="0 0 20 20"><use href="#cmap"/></svg></button>
<button class="tb" aria-label="Messages"><svg viewBox="0 0 20 20"><path d="M.5.500h15v19H.5z" fill="#ffd8d8" stroke="#999"/><path d="M15.500.500h4v19h-4zM16 5h3M16 10h3M16 15h3" fill="#f0f0f0" stroke="#888"/><path d="M8.500 3c5 0 7 2 7 5s-2 5-5 5l2 4-5-4c-4 0-6-2-6-5s2-5 7-5z" fill="#c0e8ff" stroke="#1078d8" stroke-width="1.300"/></svg></button>
<div class="field">Page 1 of 1</div>
<div class="field flex-grow-1">/concept[1]</div>
</footer>
<div class="sizer position-absolute"></div>
</main>
</div>
</body>
</html>
